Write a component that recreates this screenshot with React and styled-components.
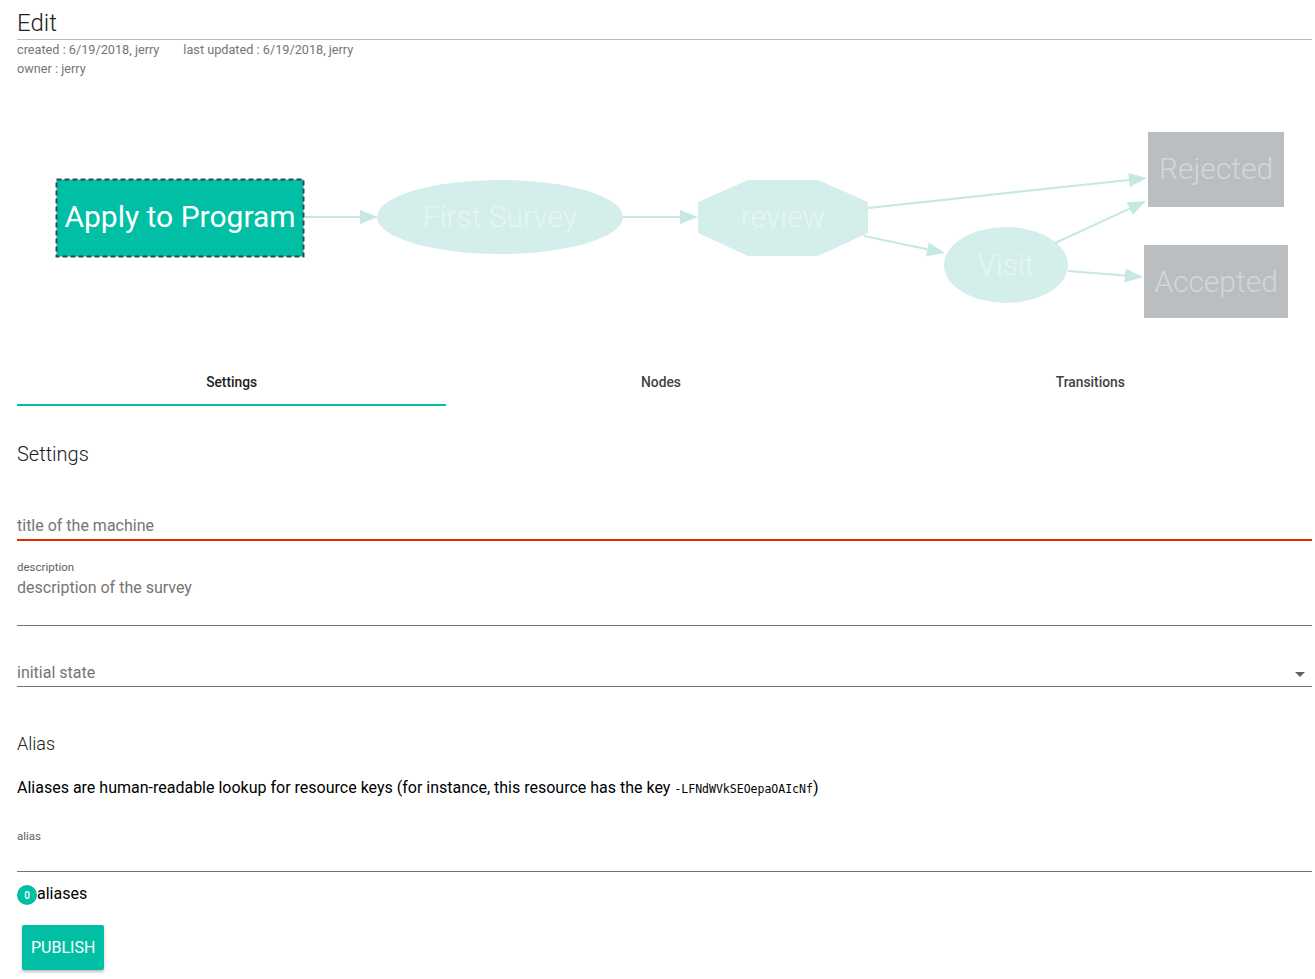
import React from 'react'
import styled, { createGlobalStyle } from 'styled-components'

const teal = '#00bfa5'

const Global = createGlobalStyle`
  body {
    margin: 0;
    font-family: Roboto, 'Noto Sans', Arial, sans-serif;
    background: #fff;
    color: #212121;
  }
`

const Page = styled.div`
  padding: 0 3px 0 17px;
  min-height: 979px;
  box-sizing: border-box;
`

const Title = styled.h1`
  margin: 0;
  padding-top: 9px;
  height: 30px;
  font-size: 24px;
  font-weight: 300;
  line-height: 28px;
  border-bottom: 1px solid #bdbdbd;
`

const Meta = styled.div`
  font-size: 12.7px;
  color: #757575;
  line-height: 19px;

  span + span {
    margin-left: 24px;
  }
`

const Graph = styled.svg`
  display: block;
  margin-top: 6px;
  width: 1295px;
  height: 272px;
`

const Tabs = styled.div`
  display: grid;
  grid-template-columns: repeat(3, 1fr);
  width: 1288px;
  height: 50px;
`

const Tab = styled.div`
  display: flex;
  align-items: center;
  justify-content: center;
  font-size: 13.8px;
  font-weight: 500;
  color: ${p => (p.$active ? '#212121' : '#424242')};
  border-bottom: 2px solid ${p => (p.$active ? teal : 'transparent')};
  padding-top: 3px;
  box-sizing: border-box;
`

const Heading = styled.h2`
  margin: 0;
  font-size: ${p => p.$size || 20}px;
  font-weight: 300;
  line-height: 24px;
  padding-top: ${p => p.$top || 0}px;
`

const Field = styled.div`
  padding-top: ${p => p.$top || 0}px;
  border-bottom: ${p => (p.$error ? '2px solid #dd2c00' : '1px solid #757575')};
  display: flex;
  flex-direction: column;
  position: relative;
`

const Label = styled.div`
  font-size: 11.5px;
  color: #616161;
  line-height: 14px;
  margin-bottom: ${p => p.$gap || 0}px;
`

const Placeholder = styled.div`
  font-size: 16px;
  color: #757575;
  line-height: 20px;
  padding-bottom: ${p => p.$bottom || 0}px;
`

const Arrow = styled.span`
  position: absolute;
  right: 7px;
  bottom: 9px;
  width: 0;
  height: 0;
  border-left: 5px solid transparent;
  border-right: 5px solid transparent;
  border-top: 5px solid #616161;
`

const Paragraph = styled.p`
  margin: 0;
  padding-top: 22px;
  font-size: 16px;
  line-height: 20px;
  color: #000;

  code {
    font-family: 'DejaVu Sans Mono', 'Liberation Mono', monospace;
    font-size: 11.5px;
  }
`

const AliasCount = styled.div`
  display: flex;
  align-items: center;
  padding-top: 10px;
  font-size: 16px;
  color: #000;
`

const Badge = styled.span`
  width: 20px;
  height: 20px;
  border-radius: 50%;
  background: ${teal};
  color: #fff;
  font-size: 10px;
  font-weight: 500;
  display: inline-flex;
  align-items: center;
  justify-content: center;
  margin-top: 3px;
`

const Button = styled.button`
  margin: 20px 0 0 5px;
  height: 45px;
  padding: 0 9px;
  border: none;
  border-radius: 2px;
  background: ${teal};
  color: #fff;
  font-family: inherit;
  font-size: 16px;
  box-shadow: 0 2px 3px rgba(0, 0, 0, 0.25);
`

const edge = '#c5e8e3'
const nodeFill = '#d4eeeb'
const nodeText = '#e6f5f3'
const finalFill = '#babec1'
const finalText = '#d3d6d8'

const Edge = ({ x1, y1, x2, y2 }) => {
  const a = Math.atan2(y2 - y1, x2 - x1)
  const L = 18
  const w = 7
  const bx = x2 - L * Math.cos(a)
  const by = y2 - L * Math.sin(a)
  const px = -Math.sin(a) * w
  const py = Math.cos(a) * w
  return (
    <g>
      <line x1={x1} y1={y1} x2={bx} y2={by} stroke={edge} strokeWidth="2" />
      <polygon points={`${x2},${y2} ${bx + px},${by + py} ${bx - px},${by - py}`} fill={edge} />
    </g>
  )
}

const Machine = () => (
  <Graph viewBox="17 84 1295 272">
    <g fontFamily="Roboto, sans-serif" textAnchor="middle" fontSize="30">
      <rect x="56.5" y="179.5" width="247" height="77" fill={teal} stroke="#37474f" strokeWidth="2" strokeDasharray="5 3" />
      <text x="180" y="227" fill="#fff">Apply to Program</text>

      <Edge x1={305} y1={217} x2={378} y2={217} />
      <ellipse cx="500" cy="217" rx="123" ry="37" fill={nodeFill} />
      <text x="500" y="227" fill={nodeText} fontWeight="300">First Survey</text>

      <Edge x1={623} y1={217} x2={698} y2={217} />
      <polygon points="698,202 748,180 818,180 868,202 868,233 818,256 748,256 698,233" fill={nodeFill} />
      <text x="783" y="227" fill={nodeText} fontWeight="300">review</text>

      <Edge x1={868} y1={208} x2={1147} y2={178} />
      <Edge x1={864} y1={236} x2={945} y2={253} />

      <ellipse cx="1006" cy="265" rx="62" ry="38" fill={nodeFill} />
      <text x="1006" y="275" fill={nodeText} fontWeight="300">Visit</text>

      <Edge x1={1055} y1={243} x2={1146} y2={201} />
      <Edge x1={1068} y1={271} x2={1143} y2={277} />

      <rect x="1148" y="132" width="136" height="75" fill={finalFill} />
      <text x="1216" y="179" fill={finalText} fontWeight="300">Rejected</text>

      <rect x="1144" y="245" width="144" height="73" fill={finalFill} />
      <text x="1216" y="292" fill={finalText} fontWeight="300">Accepted</text>
    </g>
  </Graph>
)

const App = () => (
  <Page>
    <Global />
    <Title>Edit</Title>
    <Meta>
      <div>
        <span>created : 6/19/2018, jerry</span>
        <span>last updated : 6/19/2018, jerry</span>
      </div>
      <div>owner : jerry</div>
    </Meta>
    <Machine />
    <Tabs>
      <Tab $active>Settings</Tab>
      <Tab>Nodes</Tab>
      <Tab>Transitions</Tab>
    </Tabs>

    <Heading $top={36}>Settings</Heading>

    <Field $top={50} $error>
      <Placeholder $bottom={3}>title of the machine</Placeholder>
    </Field>

    <Field $top={19}>
      <Label $gap={4}>description</Label>
      <Placeholder $bottom={27}>description of the survey</Placeholder>
    </Field>

    <Field $top={37}>
      <Placeholder $bottom={3}>initial state</Placeholder>
      <Arrow />
    </Field>

    <Heading $size={18} $top={45}>Alias</Heading>

    <Paragraph>
      Aliases are human-readable lookup for resource keys (for instance, this resource has the key <code>-LFNdWVkSEOepaOAIcNf</code>)
    </Paragraph>

    <Field $top={30}>
      <Label>alias</Label>
      <Placeholder $bottom={28} />
    </Field>

    <AliasCount>
      <Badge>0</Badge>aliases
    </AliasCount>

    <Button>PUBLISH</Button>
  </Page>
)

export default App
